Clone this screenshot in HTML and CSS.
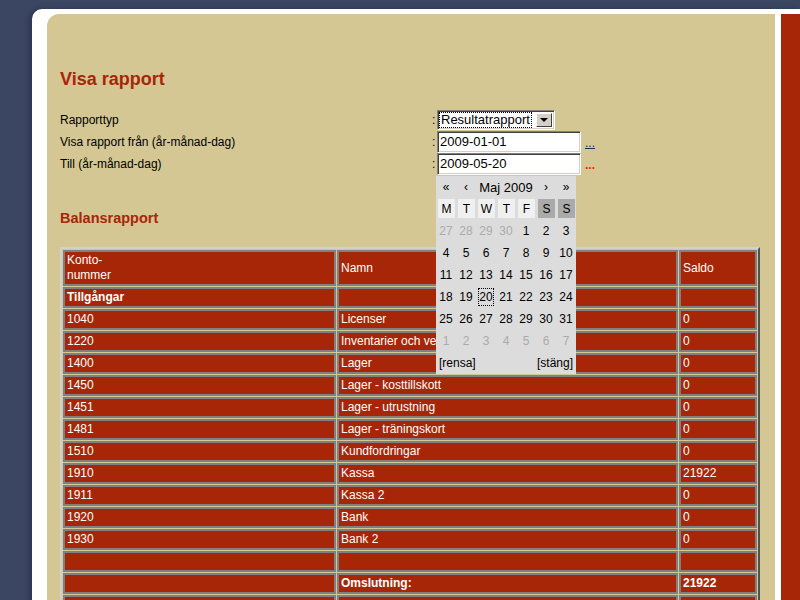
FILE: index.html
```html
<!DOCTYPE html>
<html lang="sv">
<head>
<meta charset="utf-8">
<title>Visa rapport</title>
<link rel="stylesheet" href="styles.css">
</head>
<body>
<div class="page">
  <div class="frame">
    <main class="content">
      <h1 class="title">Visa rapport</h1>
      <div class="form">
        <div class="label">Rapporttyp</div>
        <div class="colon">:</div>
        <div class="ctrl">
          <div class="select"><span class="sel-text"><span class="focus">Resultatrapport</span></span><span class="sel-btn"><span class="tri"></span></span></div>
        </div>
        <div></div>

        <div class="label">Visa rapport från (år-månad-dag)</div>
        <div class="colon">:</div>
        <div class="ctrl"><div class="input">2009-01-01</div></div>
        <a class="dots" href="#">...</a>

        <div class="label">Till (år-månad-dag)</div>
        <div class="colon">:</div>
        <div class="ctrl">
          <div class="input">2009-05-20</div>
          <div class="cal">
            <div class="cal-head">
              <span>«</span><span>‹</span><span class="month">Maj 2009</span><span>›</span><span>»</span>
            </div>
            <div class="cal-days">
              <span class="dn">M</span><span class="dn">T</span><span class="dn">W</span><span class="dn">T</span><span class="dn">F</span><span class="dn we">S</span><span class="dn we">S</span>
            </div>
            <div class="cal-grid">
              <span class="o">27</span><span class="o">28</span><span class="o">29</span><span class="o">30</span><span>1</span><span>2</span><span>3</span>
              <span>4</span><span>5</span><span>6</span><span>7</span><span>8</span><span>9</span><span>10</span>
              <span>11</span><span>12</span><span>13</span><span>14</span><span>15</span><span>16</span><span>17</span>
              <span>18</span><span>19</span><span><b class="today">20</b></span><span>21</span><span>22</span><span>23</span><span>24</span>
              <span>25</span><span>26</span><span>27</span><span>28</span><span>29</span><span>30</span><span>31</span>
              <span class="o">1</span><span class="o">2</span><span class="o">3</span><span class="o">4</span><span class="o">5</span><span class="o">6</span><span class="o">7</span>
            </div>
            <div class="cal-foot"><span>[rensa]</span><span>[stäng]</span></div>
          </div>
        </div>
        <span class="dots red">...</span>
      </div>

      <h2 class="subtitle">Balansrapport</h2>

      <table class="report">
        <colgroup><col class="c1"><col class="c2"><col class="c3"></colgroup>
        <tr><td>Konto-<br>nummer</td><td>Namn</td><td>Saldo</td></tr>
        <tr><td class="b">Tillgångar</td><td>&nbsp;</td><td>&nbsp;</td></tr>
        <tr><td>1040</td><td>Licenser</td><td>0</td></tr>
        <tr><td>1220</td><td>Inventarier och ve</td><td>0</td></tr>
        <tr><td>1400</td><td>Lager</td><td>0</td></tr>
        <tr><td>1450</td><td>Lager - kosttillskott</td><td>0</td></tr>
        <tr><td>1451</td><td>Lager - utrustning</td><td>0</td></tr>
        <tr><td>1481</td><td>Lager - träningskort</td><td>0</td></tr>
        <tr><td>1510</td><td>Kundfordringar</td><td>0</td></tr>
        <tr><td>1910</td><td>Kassa</td><td>21922</td></tr>
        <tr><td>1911</td><td>Kassa 2</td><td>0</td></tr>
        <tr><td>1920</td><td>Bank</td><td>0</td></tr>
        <tr><td>1930</td><td>Bank 2</td><td>0</td></tr>
        <tr><td>&nbsp;</td><td>&nbsp;</td><td>&nbsp;</td></tr>
        <tr><td>&nbsp;</td><td class="b">Omslutning:</td><td class="b">21922</td></tr>
        <tr><td>&nbsp;</td><td>&nbsp;</td><td>&nbsp;</td></tr>
      </table>
    </main>
    <aside class="sidebar"></aside>
  </div>
</div>
</body>
</html>
```

FILE: styles.css
```css
html, body {
  margin: 0;
  padding: 0;
}
body {
  background: #3b4663;
  font-family: "Liberation Sans", Arial, sans-serif;
  font-size: 12px;
  color: #000;
  overflow: hidden;
  height: 600px;
}
.page {
  padding: 9px 0 0 32px;
}
.frame {
  display: flex;
  gap: 6px;
  background: #fff;
  border-top-left-radius: 10px;
  padding: 5px 0 0 15px;
  height: 700px;
  box-shadow: -3px 0 5px rgba(20, 25, 40, 0.35);
}
.content {
  width: 715px;
  flex: none;
  background: #d4c794;
  border-top-left-radius: 12px;
  padding: 54px 0 0 13px;
}
.sidebar {
  flex: 1;
  background: #a82608;
}
.title {
  margin: 0;
  font-size: 18px;
  line-height: 22px;
  font-weight: bold;
  color: #a82608;
}
.form {
  margin-top: 19px;
  display: grid;
  grid-template-columns: 372px 5px auto auto;
  grid-auto-rows: 22px;
  align-items: center;
  justify-content: start;
}
.label {
  line-height: 15px;
}
.colon {
  line-height: 15px;
}
.ctrl {
  position: relative;
  height: 22px;
  display: flex;
  align-items: center;
}
.select {
  display: flex;
  width: 118px;
  height: 20px;
  box-sizing: border-box;
  background: #fff;
  border-top: 1px solid #808080;
  border-left: 1px solid #808080;
  border-right: 1px solid #fff;
  border-bottom: 1px solid #fff;
  box-shadow: inset 1px 1px 0 #404040, inset -1px -1px 0 #d4d0c8;
  padding: 2px;
}
.sel-text {
  flex: 1;
  display: flex;
  align-items: center;
  font-size: 13px;
}
.focus {
  outline: 1px dotted #000;
  outline-offset: 0;
  padding: 0 1px;
  line-height: 14px;
}
.sel-btn {
  width: 16px;
  background: #d4d0c8;
  box-sizing: border-box;
  border-top: 1px solid #fff;
  border-left: 1px solid #fff;
  border-right: 1px solid #404040;
  border-bottom: 1px solid #404040;
  display: flex;
  align-items: center;
  justify-content: center;
}
.tri {
  width: 0;
  height: 0;
  border-left: 4px solid transparent;
  border-right: 4px solid transparent;
  border-top: 4px solid #000;
}
.input {
  width: 144px;
  height: 22px;
  box-sizing: border-box;
  background: #fff;
  border-top: 1px solid #808080;
  border-left: 1px solid #808080;
  border-right: 1px solid #fff;
  border-bottom: 1px solid #fff;
  box-shadow: inset 1px 1px 0 #404040, inset -1px -1px 0 #d4d0c8;
  padding: 0 2px;
  font-size: 13px;
  line-height: 20px;
}
.dots {
  margin-left: 4px;
  color: #1c2a5c;
  font-size: 12px;
  line-height: 15px;
  align-self: end;
  margin-bottom: 2px;
}
.dots.red {
  color: #ff1a00;
  font-weight: bold;
  text-decoration: none;
}
.cal {
  position: absolute;
  left: -1px;
  top: 23px;
  width: 140px;
  background: #dcdcdc;
  font-size: 12px;
  z-index: 2;
}
.cal-head {
  display: grid;
  grid-template-columns: repeat(7, 20px);
  height: 22px;
  align-items: center;
  justify-items: center;
}
.cal-head .month {
  grid-column: span 3;
  font-size: 13px;
}
.cal-days {
  display: grid;
  grid-template-columns: repeat(7, 17px);
  column-gap: 3px;
  padding: 1px 0 0 2px;
  height: 22px;
  box-sizing: border-box;
}
.dn {
  height: 19px;
  background: #f0f0f0;
  display: flex;
  align-items: center;
  justify-content: center;
}
.dn.we {
  background: #aaaaaa;
}
.cal-grid {
  display: grid;
  grid-template-columns: repeat(7, 20px);
  grid-auto-rows: 22px;
  align-items: center;
  justify-items: center;
}
.cal-grid .o {
  color: #ababab;
}
.today {
  font-weight: normal;
  outline: 1px dotted #000;
  padding: 1px 0;
  width: 17px;
  text-align: center;
  line-height: 15px;
}
.cal-foot {
  display: flex;
  justify-content: space-between;
  height: 22px;
  align-items: center;
  padding: 0 3px;
}
.subtitle {
  margin: 34px 0 0;
  font-size: 14.5px;
  line-height: 18px;
  font-weight: bold;
  color: #a82608;
}
.report {
  margin-top: 20px;
  width: 700px;
  table-layout: fixed;
  border-collapse: separate;
  border-spacing: 1px;
  border-style: solid;
  border-width: 2px;
  border-color: #d0d0d0 #505050 #505050 #d0d0d0;
}
.report col.c1 { width: 273px; }
.report col.c2 { width: 341px; }
.report td {
  background: #a82608;
  color: #fff;
  border: 2px solid #808080;
  padding: 1px 2px;
  line-height: 15px;
  font-size: 12px;
  vertical-align: middle;
  white-space: nowrap;
  overflow: hidden;
}
.report td.b {
  font-weight: bold;
}
```
